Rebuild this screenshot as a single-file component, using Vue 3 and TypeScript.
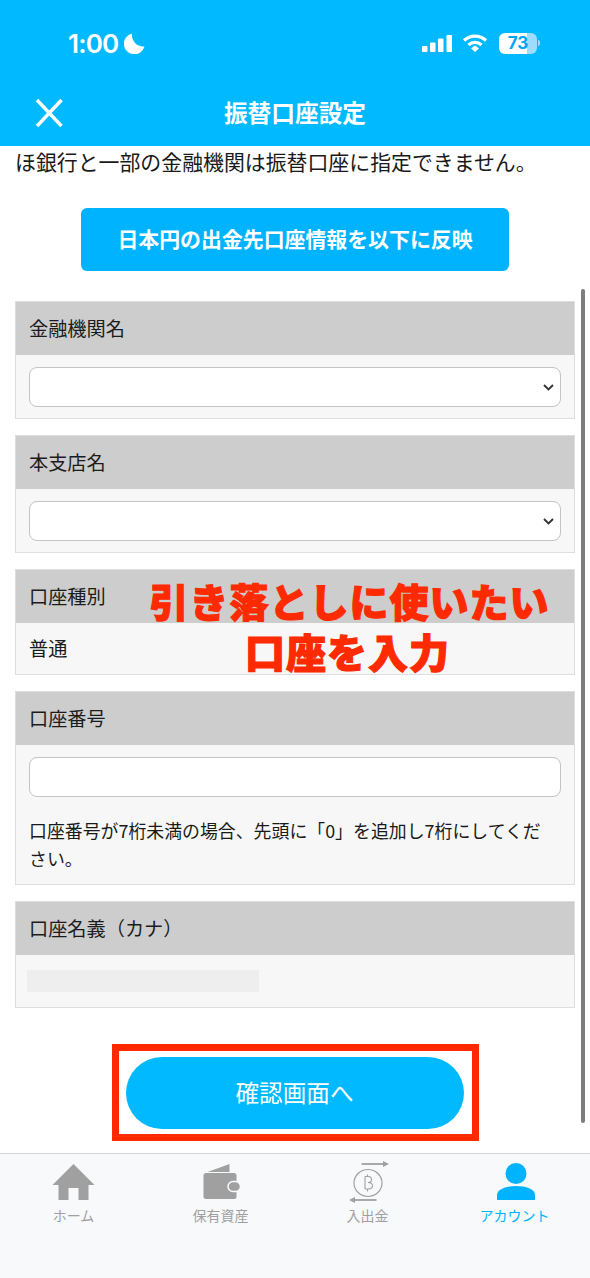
<script setup lang="ts">
interface Tab { label: string; active?: boolean }
const tabs: Tab[] = [{ label: 'ホーム' }, { label: '保有資産' }, { label: '入出金' }, { label: 'アカウント', active: true }]
</script>

<template>
  <div class="phone">
    <header class="head">
      <div class="status">
        <div class="time">1:00
          <svg width="21" height="21" viewBox="0 0 21 21"><path fill="#fff" d="M8 0.5A10.500 10.500 0 1 0 20.500 13.500 11.500 11.500 0 0 1 8 0.5Z" /></svg>
        </div>
        <div class="indicators">
          <svg width="30" height="17" viewBox="0 0 30 17" fill="#fff">
            <rect x="0" y="11" width="5.500" height="6" rx="1" /><rect x="8" y="7.500" width="5.500" height="9.500" rx="1" />
            <rect x="16" y="3.500" width="5.500" height="13.500" rx="1" /><rect x="24.500" y="0" width="5.500" height="17" rx="1" />
          </svg>
          <svg class="wifi" width="26" height="18" viewBox="0 0 25 18" fill="none" stroke="#fff" stroke-width="3.200">
            <path d="M1.500 6.500a16 16 0 0 1 22 0" /><path d="M6 11a9.500 9.500 0 0 1 13 0" /><path fill="#fff" stroke="none" d="M12.500 11.500 16.500 14.500 12.500 18 8.500 14.500Z" />
          </svg>
          <div class="battery"><span class="num">73</span></div>
          <span class="nub"></span>
        </div>
      </div>
      <div class="titlebar">
        <svg class="close" width="30" height="30" viewBox="0 0 30 30" stroke="#fff" stroke-width="3.400"><path d="M3 2 27.500 28M27.500 2 3 28" /></svg>
        <h1>振替口座設定</h1>
      </div>
    </header>

    <main class="content">
      <p class="notice">ほ銀行と一部の金融機関は振替口座に指定できません。</p>
      <button class="reflect">日本円の出金先口座情報を以下に反映</button>

      <section class="card">
        <div class="label">金融機関名</div>
        <div class="body"><div class="select"><svg width="11" height="7" viewBox="0 0 11 7" fill="none" stroke="#333" stroke-width="1.900"><path d="M1 1l4.500 4.500L10 1" /></svg></div></div>
      </section>
      <section class="card">
        <div class="label">本支店名</div>
        <div class="body"><div class="select"><svg width="11" height="7" viewBox="0 0 11 7" fill="none" stroke="#333" stroke-width="1.900"><path d="M1 1l4.500 4.500L10 1" /></svg></div></div>
      </section>
      <section class="card overlay-host">
        <div class="label">口座種別</div>
        <div class="body plain">普通</div>
        <div class="annot"><span>引き落としに使いたい</span><span>口座を入力</span></div>
      </section>
      <section class="card">
        <div class="label">口座番号</div>
        <div class="body with-hint"><div class="select"></div>
          <p class="hint">口座番号が7桁未満の場合、先頭に「0」を追加し7桁にしてください。</p></div>
      </section>
      <section class="card">
        <div class="label">口座名義（カナ）</div>
        <div class="body masked"><div class="mask"></div></div>
      </section>

      <div class="confirm-wrap"><button class="confirm">確認画面へ</button></div>
      <div class="scrollbar"></div>
    </main>

    <nav class="tabs">
      <div v-for="(t, i) in tabs" :key="t.label" class="tab" :class="{ active: t.active }">
        <svg class="ico" width="60" height="40" viewBox="0 0 60 40">
          <path v-if="i === 0" fill="#a0a0a0" d="M29.500 3 50.500 24H44.500V39H34.500V27H24.500V39H14.500V24H8.500Z" />
          <g v-else-if="i === 1">
            <path fill="#a0a0a0" d="M16.500 11 38.500 3V11Z" />
            <rect x="12.500" y="12" width="33" height="26" rx="2.500" fill="#a0a0a0" />
            <rect x="37" y="20.500" width="12.500" height="10" rx="5" fill="#a0a0a0" stroke="#f8f9fb" stroke-width="1.500" />
          </g>
          <g v-else-if="i === 2" fill="none" stroke="#a0a0a0">
            <ellipse cx="30" cy="22" rx="14" ry="13.500" stroke-width="1.200" />
            <path d="M27 15.500V28M27 15.500H30.500Q33.500 15.500 33.500 18.700 33.500 21.500 30 21.500 34.500 21.500 34.500 24.800 34.500 28 30.500 28H27M29.500 13.500V15.500M29.500 28V30.500" stroke-width="1.100" />
            <path d="M23.500 3H46" stroke-width="1.800" />
            <path fill="#a0a0a0" stroke="none" d="M45 0 51 3 45 6Z" />
            <path d="M38.500 39H16" stroke-width="1.800" />
            <path fill="#a0a0a0" stroke="none" d="M17 36 11 39 17 42Z" />
          </g>
          <g v-else fill="#00b3ff">
            <circle cx="31" cy="12.500" r="10.500" />
            <path d="M12 39V34C12 28 21 25 31 25S50 28 50 34V39Z" />
          </g>
        </svg>
        <span>{{ t.label }}</span>
      </div>
    </nav>
  </div>
</template>

<style>
html, body { margin: 0; padding: 0; background: #fff; }
</style>

<style scoped>
.phone {
  width: 590px; height: 1278px; overflow: hidden; display: flex; flex-direction: column;
  font-family: "Noto Sans CJK JP", "Noto Sans", sans-serif; color: #1a1a1a; background: #fff;
}
.head { height: 146px; background: #00b9ff; color: #fff; flex: none; display: flex; flex-direction: column; }
.status { height: 86px; padding: 0 50px 0 68px; display: flex; justify-content: space-between; align-items: center; }
.time { font: 600 26px/30px Inter, "Noto Sans", sans-serif; display: flex; align-items: center; gap: 6px; letter-spacing: -0.8px; margin-top: 1px; }
.indicators { display: flex; align-items: center; gap: 10px; }
.wifi { margin-right: 1px; }
.battery { width: 38px; height: 21px; border-radius: 6px; background: linear-gradient(90deg, #fff 0 73%, #9edcff 73%); color: #00a5ee; text-align: center; font: 700 17px/21px Inter, sans-serif; }
.nub { width: 2px; height: 6px; background: #9edcff; border-radius: 0 2px 2px 0; margin-left: -9px; }
.titlebar { flex: 1; position: relative; display: flex; align-items: center; justify-content: center; padding-bottom: 8px; }
.close { position: absolute; left: 34px; top: 12px; }
h1 { margin: 0; font-size: 23.700px; font-weight: 700; line-height: 32px; }
.content { flex: 1; min-height: 0; position: relative; padding: 0 15px; overflow: hidden; }
.notice { margin: 0; font-size: 20.900px; line-height: 30px; height: 62px; white-space: nowrap; box-sizing: border-box; }
.reflect {
  display: block; width: 428px; height: 63px; margin: 0 auto 30px; padding: 0 0 2px; border: 0; border-radius: 6px;
  background: #00b3ff; color: #fff; font: 700 20.900px/1 "Noto Sans CJK JP", sans-serif;
}
.card { border: 1px solid #dedede; background: #f7f7f7; margin-bottom: 16px; box-sizing: border-box; width: 560px; }
.label { height: 53px; background: #cdcdcd; padding-left: 13px; font-size: 19.200px; line-height: 52px; color: #1c1c1c; }
.body { padding: 12px 13px 11px; }
.select { height: 38px; border: 1px solid #c4c4c4; border-radius: 8px; background: #fff; display: flex; align-items: center; justify-content: flex-end; padding-right: 6px; }
.with-hint { padding-bottom: 12px; }
.plain { padding: 0 13px; height: 51px; font-size: 19.200px; line-height: 50px; }
.hint { margin: 19px 0 0; font-size: 17.900px; line-height: 28px; padding-right: 12px; }
.masked { height: 52px; box-sizing: border-box; padding: 15px 11px 0; }
.mask { width: 232px; height: 22px; background: #eeeeee; }
.overlay-host { position: relative; }
.annot { position: absolute; left: 0; right: 0; top: 4px; display: flex; flex-direction: column; align-items: center; color: #ff2a00; font: 900 39px/52px "Noto Sans CJK JP", sans-serif; letter-spacing: 1px; pointer-events: none; -webkit-text-stroke: 1.200px #ff2a00; }
.annot span:first-child { margin-left: 109px; white-space: nowrap; }
.annot span:last-child { margin-left: 105px; font-size: 40px; line-height: 50px; }
.confirm-wrap { width: 367px; height: 97px; box-sizing: border-box; border: 7px solid #ff2a00; margin: 36px auto 0; padding-right: 3px; display: flex; align-items: center; justify-content: center; position: relative; }
.confirm { width: 338px; height: 72px; border: 0; border-radius: 36px; background: #00b9ff; color: #fff; font: 400 23.600px/1 "Noto Sans CJK JP", sans-serif; flex: none; position: relative; left: 1px; }
.scrollbar { position: absolute; right: 5px; top: 143px; width: 4px; height: 834px; background: #7d7d7d; border-radius: 2px; }
.tabs { height: 125px; flex: none; box-sizing: border-box; border-top: 1px solid #d5d6d8; background: #f8f9fb; display: grid; grid-template-columns: repeat(4, 147px); padding: 7px 0 0 0; }
.tab { display: flex; flex-direction: column; align-items: center; color: #a0a0a0; font-size: 14px; line-height: 22px; }
.tab span { margin-top: 3px; }
.tab.active { color: #00b3ff; }
.ico { display: block; overflow: visible; }
</style>
